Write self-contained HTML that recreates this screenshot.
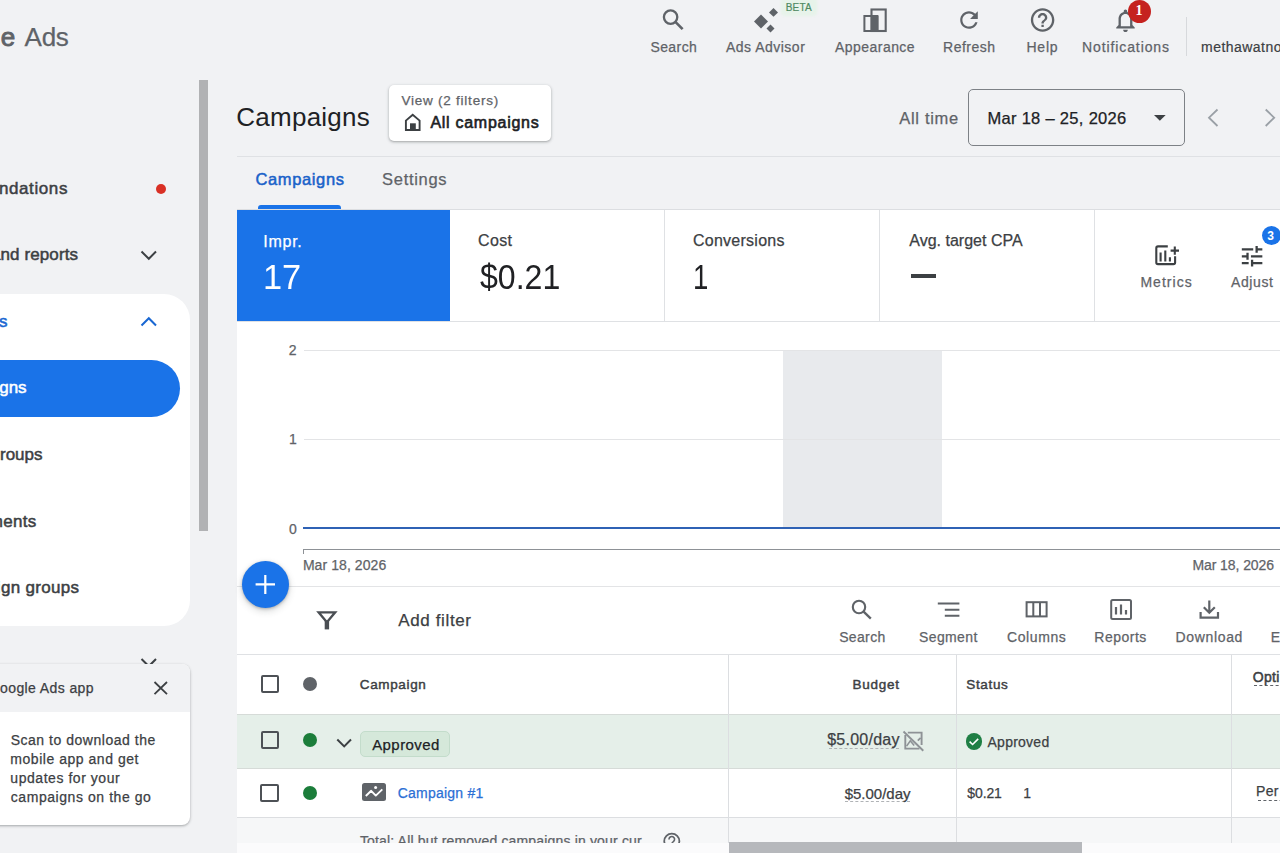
<!DOCTYPE html>
<html><head><meta charset="utf-8">
<style>
*{margin:0;padding:0;box-sizing:border-box}
html,body{width:1280px;height:853px;overflow:hidden;background:#f1f2f4;font-family:"Liberation Sans",sans-serif;position:relative}
.t{position:absolute;white-space:nowrap;z-index:2}
.s{position:absolute}
svg{position:absolute;overflow:visible}
</style></head><body>
<!-- ===== left nav ===== -->
<div class="s" style="left:199px;top:80px;width:9px;height:451px;background:#b1b2b4"></div>
<div class="s" style="left:156px;top:184px;width:10px;height:10px;border-radius:50%;background:#d93025"></div>
<svg style="left:0;top:0" width="1" height="1"><path d="M141.5 251.5 L148.8 258.8 L156 251.5" fill="none" stroke="#3c4043" stroke-width="2"/></svg>
<div class="s" style="left:-40px;top:293.6px;width:229.8px;height:332.2px;background:#fff;border-radius:26px"></div>
<svg style="left:0;top:0" width="1" height="1"><path d="M141.5 325.5 L148.8 318.2 L156 325.5" fill="none" stroke="#1967d2" stroke-width="2"/></svg>
<div class="s" style="left:-40px;top:359.7px;width:219.7px;height:57.1px;background:#1a73e8;border-radius:28.5px"></div>
<svg style="left:0;top:0" width="1" height="1"><path d="M141.5 659 L148.8 666.3 L156 659" fill="none" stroke="#3c4043" stroke-width="2"/></svg>

<!-- popup card -->
<div class="s" style="left:-20px;top:664.2px;width:209.8px;height:161.3px;background:#fff;border-radius:8px;box-shadow:0 1px 3px rgba(60,64,67,.3),0 1px 2px rgba(60,64,67,.15);overflow:hidden;z-index:5">
  <div class="s" style="left:0;top:0;width:100%;height:47.8px;background:#f1f2f4"></div>
</div>
<svg style="left:0;top:0;z-index:6" width="1" height="1"><path d="M154.5 682 L167 694.2 M167 682 L154.5 694.2" fill="none" stroke="#3c4043" stroke-width="1.8"/></svg>

<!-- ===== top toolbar icons ===== -->
<svg style="left:0;top:0" width="1" height="1" fill="none" stroke="#5f6368">
  <!-- search -->
  <circle cx="670.6" cy="17.1" r="6.7" stroke-width="2.3"/>
  <path d="M675.4 21.9 L682.6 29.1" stroke-width="2.7"/>
  <!-- ads advisor -->
  <path d="M761 14.4 L768 21.4 L761 28.4 L754 21.4 Z" fill="#5f6368" stroke="none"/>
  <path d="M773.5 8 L778 12.4 L773.5 16.8 L769 12.4 Z" fill="#5f6368" stroke="none"/>
  <path d="M770.5 24.5 L774.5 28.5 L770.5 32.5 L766.5 28.5 Z" fill="#5f6368" stroke="none"/>
  <!-- appearance -->
  <rect x="864.4" y="16" width="13" height="15" stroke-width="2"/>
  <rect x="871.5" y="9.5" width="14.2" height="21.5" stroke-width="2.1"/>
  <rect x="870.8" y="16" width="7.6" height="15" fill="#5f6368" stroke="none"/>
</svg>
<svg style="left:0;top:0" width="1" height="1">
  <g transform="translate(955.8 6.8) scale(1.1)" fill="#5f6368"><path d="M17.65 6.35C16.2 4.9 14.21 4 12 4c-4.42 0-7.99 3.58-7.99 8s3.57 8 7.99 8c3.73 0 6.84-2.55 7.73-6h-2.08c-.82 2.33-3.04 4-5.65 4-3.31 0-6-2.69-6-6s2.69-6 6-6c1.66 0 3.14.69 4.22 1.78L13 11h7V4l-2.35 2.35z"/></g>
  <g transform="translate(1028.5 5.9) scale(1.175)" fill="#5f6368"><path d="M11 18h2v-2h-2v2zm1-16C6.48 2 2 6.48 2 12s4.48 10 10 10 10-4.48 10-10S17.52 2 12 2zm0 18c-4.41 0-8-3.59-8-8s3.59-8 8-8 8 3.59 8 8-3.59 8-8 8zm0-14c-2.21 0-4 1.79-4 4h2c0-1.1.9-2 2-2s2 .9 2 2c0 2-3 1.75-3 5h2c0-2.25 3-2.5 3-5 0-2.21-1.79-4-4-4z"/></g>
  <g transform="translate(1111.6 6.6) scale(1.156)" fill="#5f6368"><path d="M12 22c1.1 0 2-.9 2-2h-4c0 1.1.9 2 2 2zm6-6v-5c0-3.07-1.64-5.64-4.5-6.32V4c0-.83-.67-1.5-1.5-1.5s-1.5.67-1.5 1.5v.68C7.63 5.36 6 7.92 6 11v5l-2 2v1h16v-1l-2-2zm-2 1H8v-6c0-2.48 1.51-4.5 4-4.5s4 2.02 4 4.5v6z"/></g>
</svg>
<div class="s" style="left:1127.9px;top:-0.2px;width:23px;height:23px;border-radius:50%;background:#c5221f;z-index:3"></div>
<div class="t" style="left:1135.6px;top:3.5px;font-size:14px;line-height:14px;color:#fff;font-family:'Liberation Serif';font-weight:bold;z-index:4">1</div>
<div class="s" style="left:781px;top:-2px;width:36px;height:18px;background:#e7f3ea;border-radius:4px;filter:blur(1px)"></div>
<div class="t" style="left:785.8px;top:3.2px;font-size:10px;line-height:10px;color:#4f8a62;letter-spacing:0.15px;-webkit-text-stroke:0.2px #4f8a62">BETA</div>
<div class="s" style="left:1185.5px;top:17px;width:1px;height:38.5px;background:#d7d9dc"></div>

<!-- ===== header ===== -->
<div class="s" style="left:389.1px;top:84.6px;width:161.5px;height:56.5px;background:#fff;border-radius:5px;box-shadow:0 1px 2px rgba(60,64,67,.3),0 1px 3px 1px rgba(60,64,67,.12)"></div>
<svg style="left:0;top:0" width="1" height="1">
  <path d="M405.9 130 L405.9 120.6 L412.7 114.7 L419.6 120.6 L419.6 130 Z" fill="none" stroke="#3c4043" stroke-width="1.9" stroke-linejoin="miter"/>
  <rect x="410" y="123.3" width="5.8" height="7.2" fill="#3c4043"/>
</svg>
<div class="s" style="left:968.2px;top:89.2px;width:216.4px;height:56.6px;border:1.3px solid #7d8186;border-radius:5px"></div>
<svg style="left:0;top:0" width="1" height="1">
  <path d="M1154 115 L1165.7 115 L1159.85 120.8 Z" fill="#3c4043"/>
  <path d="M1217.5 109.5 L1209 117.7 L1217.5 126" fill="none" stroke="#9aa0a6" stroke-width="1.8"/>
  <path d="M1265.7 109.5 L1274.2 117.7 L1265.7 126" fill="none" stroke="#9aa0a6" stroke-width="1.8"/>
</svg>
<div class="s" style="left:236.6px;top:155.8px;width:1044px;height:1px;background:#dfe1e4"></div>

<!-- tabs -->
<div class="s" style="left:258px;top:205px;width:82.6px;height:4px;background:#1a73e8;border-radius:3px 3px 0 0"></div>

<!-- ===== metrics ===== -->
<div class="s" style="left:237px;top:208.8px;width:1043px;height:1px;background:#dcdee1"></div>
<div class="s" style="left:237px;top:209.8px;width:1043px;height:111.6px;background:#fff"></div>
<div class="s" style="left:237px;top:209.8px;width:212.8px;height:111px;background:#1a73e8"></div>
<div class="s" style="left:664px;top:209.8px;width:1px;height:111.6px;background:#dfe1e4"></div>
<div class="s" style="left:879px;top:209.8px;width:1px;height:111.6px;background:#dfe1e4"></div>
<div class="s" style="left:1094px;top:209.8px;width:1px;height:111.6px;background:#dfe1e4"></div>
<div class="s" style="left:237px;top:321px;width:1043px;height:1px;background:#dfe1e4"></div>
<div class="s" style="left:910.6px;top:274.3px;width:25.4px;height:3.6px;background:#3c4043"></div>
<svg style="left:0;top:0" width="1" height="1">
  <g fill="none" stroke="#3c4043" stroke-width="2.1">
    <path d="M1167.8 246.4 L1158 246.4 Q1156.3 246.4 1156.3 248.1 L1156.3 262.4 Q1156.3 264.1 1158 264.1 L1173.4 264.1 Q1175.1 264.1 1175.1 262.4 L1175.1 256.2"/>
    <path d="M1174.8 246.4 L1174.8 254.8 M1170.6 250.6 L1179 250.6"/>
    <path d="M1160.6 252.6 L1160.6 261.4 M1165.3 250.6 L1165.3 261.4 M1169.9 257.3 L1169.9 261.4"/>
  </g>
  <g transform="translate(1238.4 242.6) scale(1.14)" fill="#3c4043"><path d="M3 17v2h6v-2H3zM3 5v2h10V5H3zm10 16v-2h8v-2h-8v-2h-2v6h2zM7 9v2H3v2h4v2h2V9H7zm14 4v-2H11v2h10zm-6-4h2V7h4V5h-4V3h-2v6z"/></g>
</svg>
<div class="s" style="left:1261.6px;top:225.8px;width:19px;height:19px;border-radius:50%;background:#1a73e8"></div>
<div class="t" style="left:1267.3px;top:229.5px;font-size:12px;line-height:12px;color:#fff;font-weight:bold">3</div>

<!-- ===== chart ===== -->
<div class="s" style="left:237px;top:322px;width:1043px;height:264.6px;background:#fff"></div>
<div class="s" style="left:782.5px;top:350px;width:159px;height:177.5px;background:#e8eaed"></div>
<div class="s" style="left:303.5px;top:349.6px;width:977px;height:1px;background:#e3e4e6"></div>
<div class="s" style="left:303.5px;top:438.8px;width:977px;height:1px;background:#e3e4e6"></div>
<div class="s" style="left:303px;top:527.2px;width:977px;height:2px;background:#2f62b5"></div>
<div class="s" style="left:303px;top:548.5px;width:977px;height:1.3px;background:#8d9196"></div>
<div class="s" style="left:303px;top:548.5px;width:1.3px;height:5px;background:#8d9196"></div>
<div class="s" style="left:237px;top:586.2px;width:1043px;height:1px;background:#e3e4e6"></div>

<!-- ===== toolbar row ===== -->
<div class="s" style="left:237px;top:587.2px;width:1043px;height:66.6px;background:#fff"></div>
<svg style="left:0;top:0" width="1" height="1" fill="none" stroke="#5f6368" stroke-width="2">
  <!-- funnel -->
  <path d="M318.6 612.3 L335.2 612.3 L326.9 622.3 Z" stroke="#4a4e53" stroke-width="2.3" stroke-linejoin="miter"/>
  <rect x="324.7" y="620.5" width="4.4" height="8.9" fill="#4a4e53" stroke="none"/>
  <!-- search -->
  <circle cx="859" cy="607" r="6.2" stroke-width="2.1"/>
  <path d="M863.6 611.6 L870.8 618.6" stroke-width="2.3"/>
  <!-- segment -->
  <path d="M937.8 603.5 L959.4 603.5 M944.8 609.7 L959.4 609.7 M944.8 615.7 L959.4 615.7"/>
  <!-- columns -->
  <rect x="1026.6" y="602.2" width="20" height="14.2"/>
  <path d="M1033.3 602.2 L1033.3 616.4 M1040 602.2 L1040 616.4"/>
  <!-- reports -->
  <rect x="1111.2" y="600" width="19.8" height="19" rx="1.5"/>
  <path d="M1116 607 L1116 614.5 M1121 604.5 L1121 614.5 M1126 610 L1126 614.5" stroke-width="2.2"/>
  <!-- download -->
  <path d="M1209.3 600.5 L1209.3 612.5 M1203.8 607.3 L1209.3 612.8 L1214.8 607.3" stroke-width="2.2"/>
  <path d="M1200.6 612 L1200.6 617.6 L1218 617.6 L1218 612" stroke-width="2.2"/>
</svg>
<div class="s" style="left:237px;top:653.6px;width:1043px;height:1px;background:#dfe1e4"></div>

<!-- FAB -->
<div class="s" style="left:241.6px;top:560.5px;width:47.5px;height:47.5px;border-radius:50%;background:#1a73e8;box-shadow:0 1px 3px rgba(60,64,67,.35),0 3px 6px 1px rgba(60,64,67,.15);z-index:3"></div>
<svg style="left:0;top:0;z-index:4" width="1" height="1"><path d="M265.3 575 L265.3 594 M255.6 584.4 L275 584.4" stroke="#fff" stroke-width="2.2"/></svg>

<!-- ===== table ===== -->
<div class="s" style="left:237px;top:654.6px;width:1043px;height:59.7px;background:#fff"></div>
<div class="s" style="left:237px;top:714.3px;width:1043px;height:1px;background:#d6dbd8"></div>
<div class="s" style="left:237px;top:715.3px;width:1043px;height:52.6px;background:#e5efe9"></div>
<div class="s" style="left:237px;top:767.9px;width:1043px;height:1px;background:#d6dbd8"></div>
<div class="s" style="left:237px;top:768.9px;width:1043px;height:48.5px;background:#fff"></div>
<div class="s" style="left:237px;top:817.3px;width:1043px;height:1px;background:#dcdee1"></div>
<div class="s" style="left:237px;top:818.3px;width:1043px;height:24.5px;background:#f6f7f8"></div>
<div class="s" style="left:728px;top:654.6px;width:1px;height:188px;background:#dcdee1"></div>
<div class="s" style="left:956px;top:654.6px;width:1px;height:188px;background:#dcdee1"></div>
<div class="s" style="left:1230.6px;top:654.6px;width:1px;height:188px;background:#dcdee1"></div>
<!-- bottom band + scrollbar -->
<div class="s" style="left:237px;top:842.6px;width:1043px;height:11px;background:#fbfbfc;z-index:5"></div>
<div class="s" style="left:729px;top:841.6px;width:353px;height:12px;background:#b6b8bc;z-index:5"></div>

<!-- checkboxes -->
<div class="s" style="left:260.6px;top:675px;width:18.4px;height:18.4px;border:2px solid #4d5156;border-radius:2px"></div>
<div class="s" style="left:260.6px;top:730.9px;width:18.4px;height:18.2px;border:2px solid #4d5156;border-radius:2px"></div>
<div class="s" style="left:260.3px;top:784px;width:18.4px;height:18.2px;border:2px solid #4d5156;border-radius:2px"></div>
<!-- dots -->
<div class="s" style="left:303px;top:677px;width:14px;height:14px;border-radius:50%;background:#5f6368"></div>
<div class="s" style="left:303px;top:732.7px;width:14px;height:14px;border-radius:50%;background:#1b7d3a"></div>
<div class="s" style="left:303px;top:785.5px;width:14px;height:14px;border-radius:50%;background:#1b7d3a"></div>
<svg style="left:0;top:0" width="1" height="1"><path d="M337.3 739.5 L344.2 746.4 L351 739.5" fill="none" stroke="#3c4043" stroke-width="2"/></svg>
<!-- chip -->
<div class="s" style="left:360px;top:730.9px;width:90.4px;height:25.7px;background:#d5e8da;border:1px solid #c3dccb;border-radius:5px"></div>
<!-- budget icon -->
<svg style="left:0;top:0" width="1" height="1" fill="none" stroke="#8e9296" stroke-width="1.9" stroke-linecap="butt">
  <path d="M907.8 732.6 L921.6 732.6 L921.6 745"/>
  <path d="M905.3 735 L905.3 748.6 L919.5 748.6"/>
  <path d="M903.5 731.5 L923.3 750.8"/>
  <path d="M906.6 746.1 L910.3 740.8 L914.2 745.6" stroke-width="1.6"/>
  <path d="M917.8 740.7 L920.6 737.8" stroke-width="1.7"/>
</svg>
<div class="s" style="left:829px;top:747.6px;width:70px;height:0;border-top:1px dashed #b0b3b6"></div>
<!-- status check -->
<div class="s" style="left:965.7px;top:733.2px;width:16.4px;height:16.4px;border-radius:50%;background:#1f7f45"></div>
<svg style="left:0;top:0" width="1" height="1"><path d="M969.6 741.6 L972.6 744.5 L978.2 738.9" fill="none" stroke="#fff" stroke-width="1.6"/></svg>
<!-- campaign icon -->
<div class="s" style="left:361.9px;top:782.6px;width:24.1px;height:18.3px;background:#5f6368;border-radius:2.5px"></div>
<svg style="left:0;top:0" width="1" height="1"><path d="M365.8 796 L371.2 790.8 L375.8 795.6 L382.3 789.4" fill="none" stroke="#fff" stroke-width="1.9" stroke-linejoin="round"/><circle cx="375.6" cy="787.6" r="1.5" fill="#fff"/></svg>
<div class="s" style="left:845px;top:800.6px;width:65px;height:0;border-top:1px dashed #b0b3b6"></div>
<div class="s" style="left:1253.5px;top:685.4px;width:30px;height:0;border-top:1.3px dashed #5f6368"></div>
<div class="s" style="left:1257.5px;top:799.8px;width:30px;height:0;border-top:1.3px dashed #5f6368"></div>
<!-- total question icon -->
<svg style="left:0;top:0" width="1" height="1"><circle cx="671.8" cy="841.2" r="7.6" fill="none" stroke="#5f6368" stroke-width="1.8"/><path d="M669 839.5 A2.8 2.8 0 1 1 673.5 841.5 L671.8 843" fill="none" stroke="#5f6368" stroke-width="1.6"/></svg>

<div class="t" style="left:0.79px;top:24.49px;font-size:26px;line-height:26px;color:#5f6368;-webkit-text-stroke:0.9px #5f6368;">e</div>
<div class="t" style="left:24.60px;top:24.29px;font-size:26px;line-height:26px;color:#5f6368;letter-spacing:-0.295px;-webkit-text-stroke:0.25px #5f6368;">Ads</div>
<div class="t" style="left:650.40px;top:40.35px;font-size:14px;line-height:14px;color:#5f6368;letter-spacing:0.426px;-webkit-text-stroke:0.25px #5f6368;">Search</div>
<div class="t" style="left:726.00px;top:40.35px;font-size:14px;line-height:14px;color:#5f6368;letter-spacing:0.487px;-webkit-text-stroke:0.25px #5f6368;">Ads Advisor</div>
<div class="t" style="left:835.10px;top:40.35px;font-size:14px;line-height:14px;color:#5f6368;letter-spacing:0.443px;-webkit-text-stroke:0.25px #5f6368;">Appearance</div>
<div class="t" style="left:943.10px;top:40.35px;font-size:14px;line-height:14px;color:#5f6368;letter-spacing:0.494px;-webkit-text-stroke:0.25px #5f6368;">Refresh</div>
<div class="t" style="left:1026.50px;top:40.35px;font-size:14px;line-height:14px;color:#5f6368;letter-spacing:0.764px;-webkit-text-stroke:0.25px #5f6368;">Help</div>
<div class="t" style="left:1082.10px;top:40.35px;font-size:14px;line-height:14px;color:#5f6368;letter-spacing:0.887px;-webkit-text-stroke:0.25px #5f6368;">Notifications</div>
<div class="t" style="left:1201.10px;top:40.35px;font-size:14px;line-height:14px;color:#3c4043;letter-spacing:0.450px;-webkit-text-stroke:0.2px #3c4043;">methawatno</div>
<div class="t" style="left:-82.74px;top:179.61px;font-size:17px;line-height:17px;color:#3c4043;letter-spacing:0.600px;-webkit-text-stroke:0.5px #3c4043;">Recommendations</div>
<div class="t" style="left:-73.21px;top:246.21px;font-size:17px;line-height:17px;color:#3c4043;letter-spacing:0.100px;-webkit-text-stroke:0.5px #3c4043;">Insights and reports</div>
<div class="t" style="left:-80.89px;top:312.61px;font-size:17px;line-height:17px;color:#1967d2;letter-spacing:0.300px;-webkit-text-stroke:0.5px #1967d2;">Campaigns</div>
<div class="t" style="left:-59.39px;top:379.31px;font-size:17px;line-height:17px;color:#fff;-webkit-text-stroke:0.5px #fff;">Campaigns</div>
<div class="t" style="left:-35.00px;top:446.41px;font-size:17px;line-height:17px;color:#3c4043;-webkit-text-stroke:0.5px #3c4043;">Ad groups</div>
<div class="t" style="left:-61.18px;top:512.91px;font-size:17px;line-height:17px;color:#3c4043;letter-spacing:0.300px;-webkit-text-stroke:0.5px #3c4043;">Experiments</div>
<div class="t" style="left:-59.49px;top:579.41px;font-size:17px;line-height:17px;color:#3c4043;letter-spacing:0.300px;-webkit-text-stroke:0.5px #3c4043;">Campaign groups</div>
<div class="t" style="left:-64.28px;top:680.65px;font-size:14px;line-height:14px;color:#3c4043;letter-spacing:0.400px;-webkit-text-stroke:0.25px #3c4043;z-index:6;">Get the Google Ads app</div>
<div class="t" style="left:10.65px;top:733.15px;font-size:14px;line-height:14px;color:#3c4043;letter-spacing:0.525px;-webkit-text-stroke:0.25px #3c4043;z-index:6;">Scan to download the</div>
<div class="t" style="left:10.35px;top:751.90px;font-size:14px;line-height:14px;color:#3c4043;letter-spacing:0.527px;-webkit-text-stroke:0.25px #3c4043;z-index:6;">mobile app and get</div>
<div class="t" style="left:10.35px;top:770.65px;font-size:14px;line-height:14px;color:#3c4043;letter-spacing:0.543px;-webkit-text-stroke:0.25px #3c4043;z-index:6;">updates for your</div>
<div class="t" style="left:10.75px;top:790.15px;font-size:14px;line-height:14px;color:#3c4043;letter-spacing:0.564px;-webkit-text-stroke:0.25px #3c4043;z-index:6;">campaigns on the go</div>
<div class="t" style="left:236.28px;top:104.24px;font-size:26px;line-height:26px;color:#202124;letter-spacing:0.253px;">Campaigns</div>
<div class="t" style="left:401.40px;top:93.77px;font-size:13.5px;line-height:13.5px;color:#5f6368;letter-spacing:0.768px;-webkit-text-stroke:0.25px #5f6368;">View (2 filters)</div>
<div class="t" style="left:430.40px;top:114.66px;font-size:16px;line-height:16px;color:#202124;letter-spacing:0.725px;-webkit-text-stroke:0.6px #202124;">All campaigns</div>
<div class="t" style="left:899.20px;top:109.83px;font-size:16.5px;line-height:16.5px;color:#5f6368;letter-spacing:0.698px;-webkit-text-stroke:0.25px #5f6368;">All time</div>
<div class="t" style="left:987.40px;top:109.83px;font-size:16.5px;line-height:16.5px;color:#202124;letter-spacing:0.309px;-webkit-text-stroke:0.25px #202124;">Mar 18 – 25, 2026</div>
<div class="t" style="left:255.45px;top:171.33px;font-size:16.5px;line-height:16.5px;color:#1a62c9;letter-spacing:0.630px;-webkit-text-stroke:0.5px #1a62c9;">Campaigns</div>
<div class="t" style="left:382.10px;top:171.33px;font-size:16.5px;line-height:16.5px;color:#5f6368;letter-spacing:0.690px;-webkit-text-stroke:0.25px #5f6368;">Settings</div>
<div class="t" style="left:263.30px;top:233.71px;font-size:16px;line-height:16px;color:#fff;letter-spacing:0.721px;-webkit-text-stroke:0.25px #fff;">Impr.</div>
<div class="t" style="left:263.45px;top:259.37px;font-size:35px;line-height:35px;color:#fff;transform:scaleX(0.9823);transform-origin:0 0;">17</div>
<div class="t" style="left:478.10px;top:233.46px;font-size:16px;line-height:16px;color:#3c4043;letter-spacing:0.316px;-webkit-text-stroke:0.25px #3c4043;">Cost</div>
<div class="t" style="left:480.30px;top:259.12px;font-size:35px;line-height:35px;color:#202124;transform:scaleX(0.9168);transform-origin:0 0;">$0.21</div>
<div class="t" style="left:692.95px;top:233.46px;font-size:16px;line-height:16px;color:#3c4043;letter-spacing:0.262px;-webkit-text-stroke:0.25px #3c4043;">Conversions</div>
<div class="t" style="left:693.28px;top:259.12px;font-size:35px;line-height:35px;color:#202124;transform:scaleX(0.7882);transform-origin:0 0;">1</div>
<div class="t" style="left:909.25px;top:233.46px;font-size:16px;line-height:16px;color:#3c4043;letter-spacing:0.013px;-webkit-text-stroke:0.25px #3c4043;">Avg. target CPA</div>
<div class="t" style="left:1140.40px;top:275.15px;font-size:14px;line-height:14px;color:#5f6368;letter-spacing:1.032px;-webkit-text-stroke:0.25px #5f6368;">Metrics</div>
<div class="t" style="left:1231.00px;top:275.15px;font-size:14px;line-height:14px;color:#5f6368;letter-spacing:0.596px;-webkit-text-stroke:0.25px #5f6368;">Adjust</div>
<div class="t" style="left:288.80px;top:343.35px;font-size:14px;line-height:14px;color:#5f6368;-webkit-text-stroke:0.25px #5f6368;">2</div>
<div class="t" style="left:289.00px;top:431.75px;font-size:14px;line-height:14px;color:#5f6368;-webkit-text-stroke:0.25px #5f6368;">1</div>
<div class="t" style="left:289.10px;top:521.55px;font-size:14px;line-height:14px;color:#5f6368;-webkit-text-stroke:0.25px #5f6368;">0</div>
<div class="t" style="left:302.90px;top:557.55px;font-size:14px;line-height:14px;color:#5f6368;letter-spacing:0.072px;-webkit-text-stroke:0.25px #5f6368;">Mar 18, 2026</div>
<div class="t" style="left:1192.40px;top:557.55px;font-size:14px;line-height:14px;color:#5f6368;letter-spacing:-0.074px;-webkit-text-stroke:0.25px #5f6368;">Mar 18, 2026</div>
<div class="t" style="left:398.30px;top:611.51px;font-size:17px;line-height:17px;color:#3c4043;letter-spacing:0.619px;-webkit-text-stroke:0.25px #3c4043;">Add filter</div>
<div class="t" style="left:839.15px;top:629.75px;font-size:14px;line-height:14px;color:#5f6368;letter-spacing:0.356px;-webkit-text-stroke:0.25px #5f6368;">Search</div>
<div class="t" style="left:919.00px;top:629.75px;font-size:14px;line-height:14px;color:#5f6368;letter-spacing:0.376px;-webkit-text-stroke:0.25px #5f6368;">Segment</div>
<div class="t" style="left:1007.05px;top:629.75px;font-size:14px;line-height:14px;color:#5f6368;letter-spacing:0.585px;-webkit-text-stroke:0.25px #5f6368;">Columns</div>
<div class="t" style="left:1094.30px;top:629.85px;font-size:14px;line-height:14px;color:#5f6368;letter-spacing:0.497px;-webkit-text-stroke:0.25px #5f6368;">Reports</div>
<div class="t" style="left:1175.50px;top:629.85px;font-size:14px;line-height:14px;color:#5f6368;letter-spacing:0.661px;-webkit-text-stroke:0.25px #5f6368;">Download</div>
<div class="t" style="left:1270.70px;top:629.85px;font-size:14px;line-height:14px;color:#5f6368;-webkit-text-stroke:0.25px #5f6368;">E</div>
<div class="t" style="left:359.80px;top:677.57px;font-size:13.5px;line-height:13.5px;color:#3c4043;letter-spacing:0.639px;-webkit-text-stroke:0.45px #3c4043;">Campaign</div>
<div class="t" style="left:852.50px;top:677.67px;font-size:13.5px;line-height:13.5px;color:#3c4043;letter-spacing:0.733px;-webkit-text-stroke:0.45px #3c4043;">Budget</div>
<div class="t" style="left:966.30px;top:677.67px;font-size:13.5px;line-height:13.5px;color:#3c4043;letter-spacing:0.656px;-webkit-text-stroke:0.45px #3c4043;">Status</div>
<div class="t" style="left:1252.70px;top:669.85px;font-size:14px;line-height:14px;color:#3c4043;letter-spacing:0.300px;-webkit-text-stroke:0.5px #3c4043;">Opti</div>
<div class="t" style="left:372.20px;top:736.90px;font-size:15px;line-height:15px;color:#202124;letter-spacing:0.419px;-webkit-text-stroke:0.25px #202124;">Approved</div>
<div class="t" style="left:827.20px;top:732.21px;font-size:16px;line-height:16px;color:#3c4043;letter-spacing:0.252px;-webkit-text-stroke:0.25px #3c4043;">$5.00/day</div>
<div class="t" style="left:987.50px;top:735.05px;font-size:14px;line-height:14px;color:#3c4043;letter-spacing:0.251px;-webkit-text-stroke:0.25px #3c4043;">Approved</div>
<div class="t" style="left:397.70px;top:785.75px;font-size:14px;line-height:14px;color:#2b6fd5;letter-spacing:0.231px;-webkit-text-stroke:0.25px #2b6fd5;">Campaign #1</div>
<div class="t" style="left:844.70px;top:785.60px;font-size:15px;line-height:15px;color:#3c4043;letter-spacing:-0.011px;-webkit-text-stroke:0.25px #3c4043;">$5.00/day</div>
<div class="t" style="left:967.30px;top:786.45px;font-size:14px;line-height:14px;color:#3c4043;letter-spacing:-0.112px;-webkit-text-stroke:0.25px #3c4043;">$0.21</div>
<div class="t" style="left:1023.20px;top:786.45px;font-size:14px;line-height:14px;color:#3c4043;-webkit-text-stroke:0.25px #3c4043;">1</div>
<div class="t" style="left:1256.00px;top:783.85px;font-size:14px;line-height:14px;color:#3c4043;letter-spacing:0.300px;-webkit-text-stroke:0.25px #3c4043;">Per</div>
<div class="t" style="left:359.90px;top:833.65px;font-size:14px;line-height:14px;color:#5f6368;letter-spacing:0.165px;-webkit-text-stroke:0.25px #5f6368;">Total: All but removed campaigns in your cur</div>
</body></html>
